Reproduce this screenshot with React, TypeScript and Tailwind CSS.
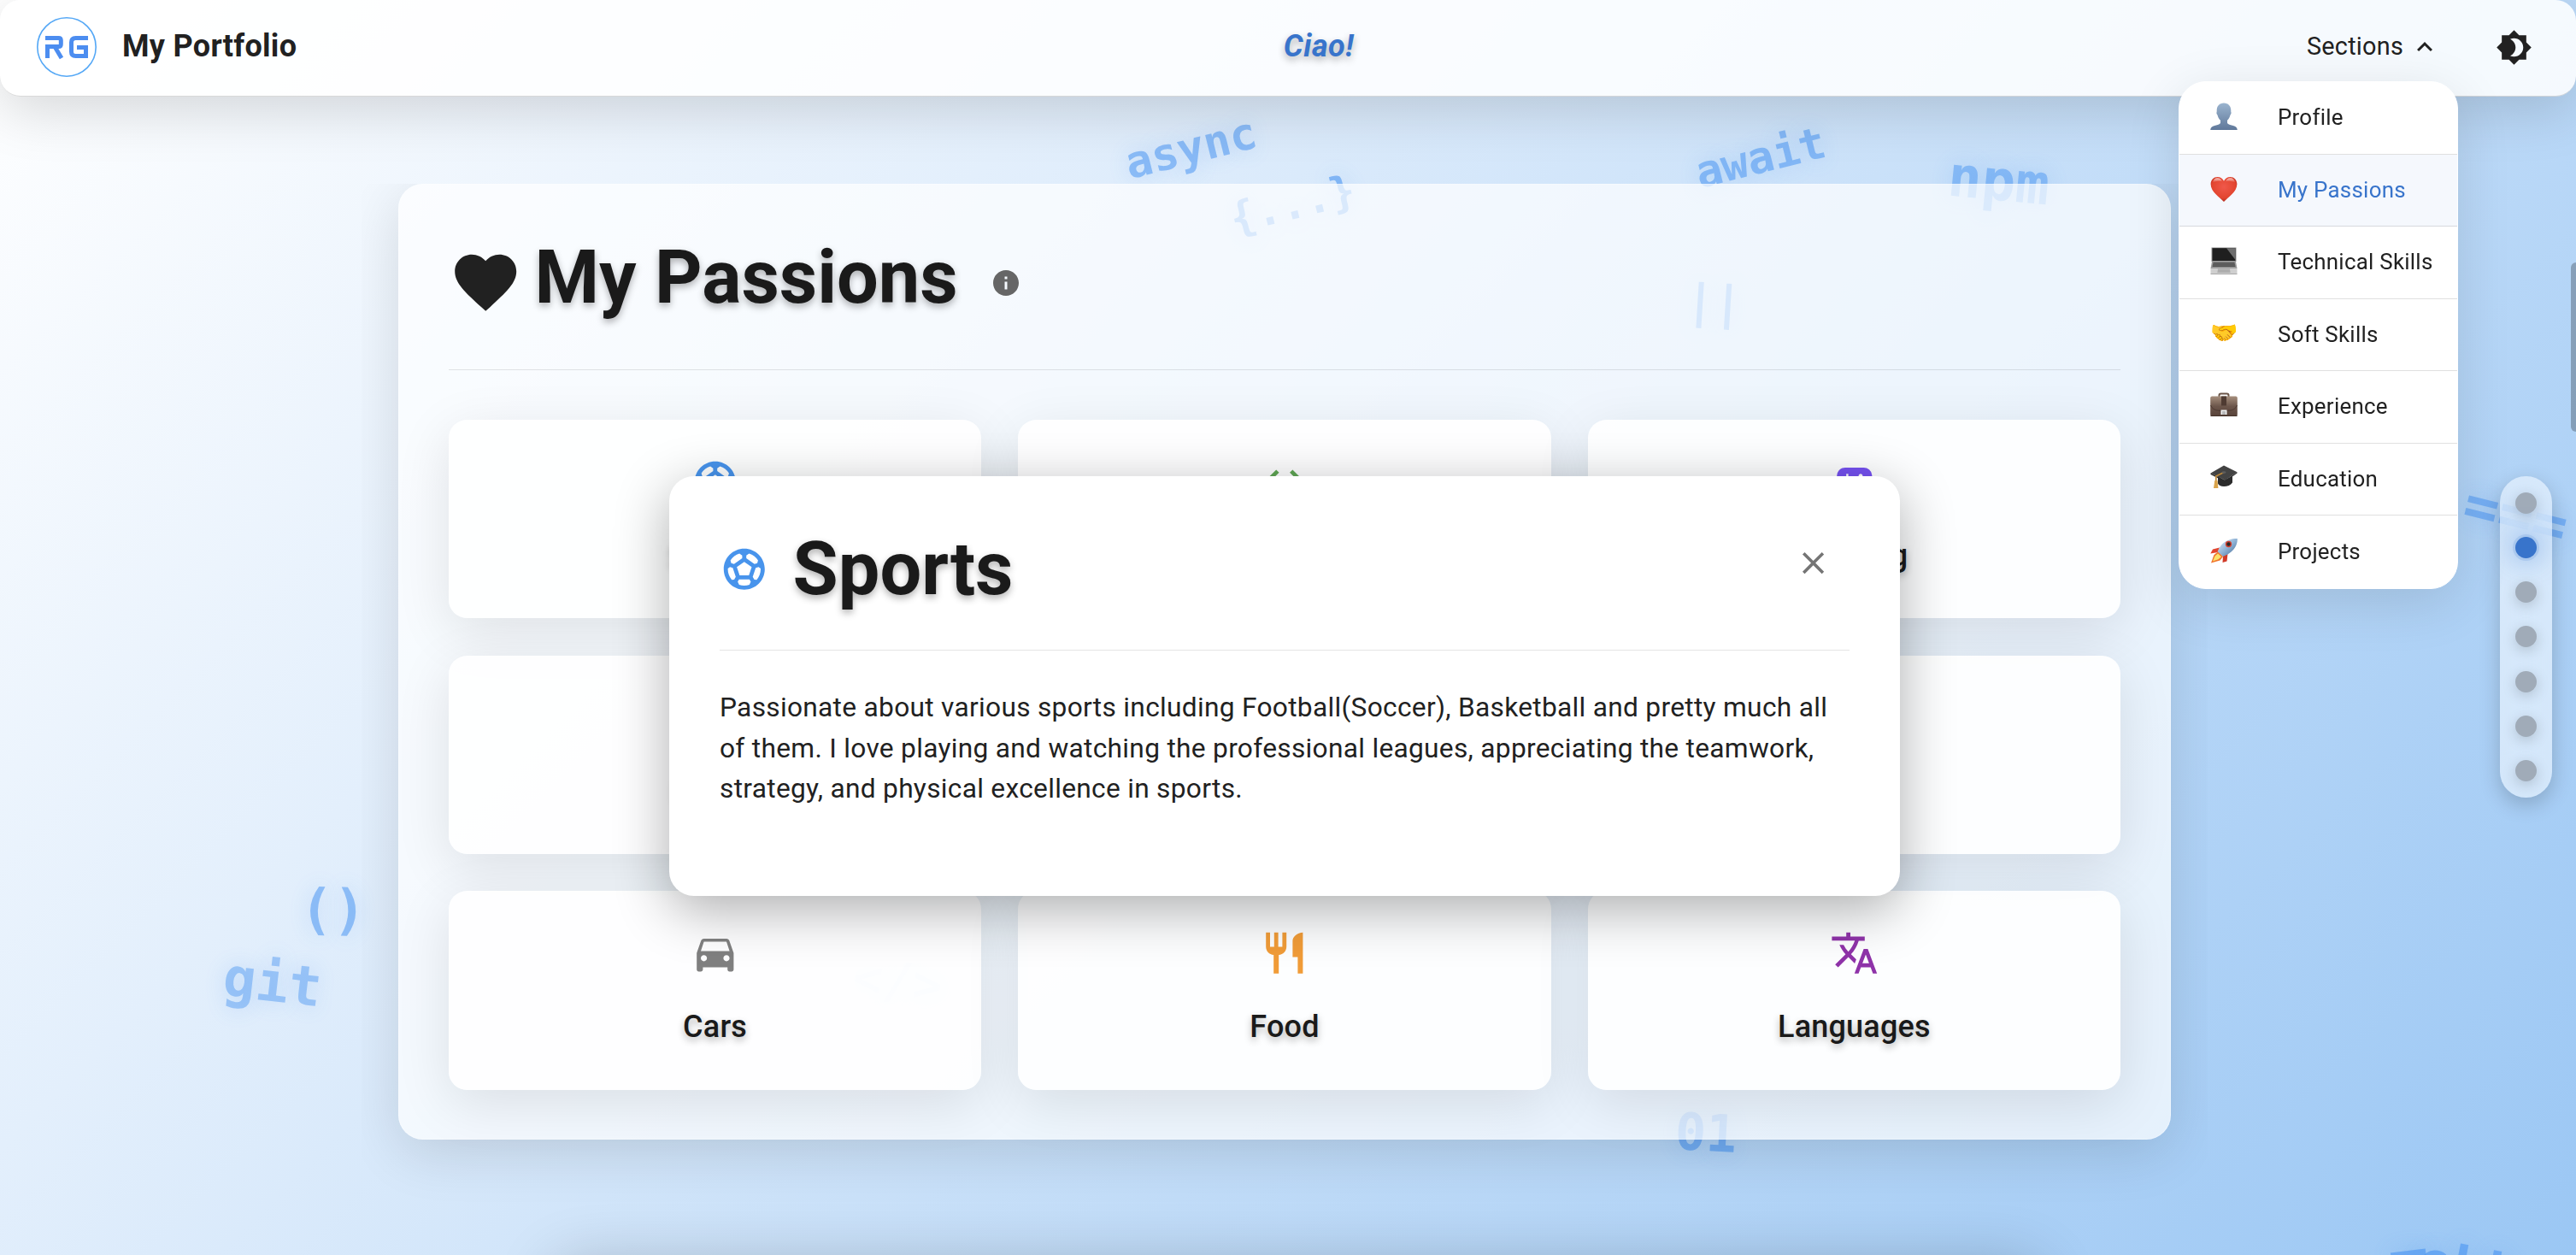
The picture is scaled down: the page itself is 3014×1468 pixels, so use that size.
import React from "react";
import {
  MdBrightness4, MdClose, MdCode, MdDirectionsCar, MdExpandLess, MdFavorite, MdFlight, MdInfo,
  MdMenuBook, MdMusicNote, MdRestaurant, MdSportsEsports, MdSportsSoccer, MdTranslate,
} from "react-icons/md";

// Floating code fragments scattered over the page background.
const tokens = [
  { t: "async", c: "left-[1315px] top-[143px] text-[52px] -rotate-[14deg] text-[#4a95f2]/55" },
  { t: "{...}", c: "left-[1438px] top-[211px] text-[49.5px] -rotate-[14deg] text-[#4a95f2]/60" },
  { t: "await", c: "left-[1982px] top-[154px] text-[51.5px] -rotate-[14deg] text-[#4a95f2]/55" },
  { t: "npm", c: "left-[2279px] top-[173px] text-[66px] rotate-[5.5deg] text-[#4a95f2]/50" },
  { t: "||", c: "left-[1973px] top-[322px] text-[54px] rotate-[3.5deg] text-[#4a95f2]/60" },
  { t: "()", c: "left-[351px] top-[1027px] text-[64px] rotate-[1deg] text-[#4a95f2]/55" },
  { t: "git", c: "left-[261px] top-[1112px] text-[64px] rotate-[6.5deg] text-[#4a95f2]/45" },
  { t: "</>", c: "left-[998px] top-[1115px] text-[58px] rotate-[6deg] text-[#4a95f2]/50" },
  { t: "===", c: "left-[2882px] top-[563px] text-[68px] rotate-[14deg] text-[#4a95f2]/55" },
  { t: "01", c: "left-[1960px] top-[1290px] text-[60px] rotate-[3deg] text-[#4a95f2]/60" },
  { t: "T", c: "left-[2797px] top-[1447px] text-[80px] -rotate-[7deg] text-[#4a95f2]/60" },
  { t: "ebb", c: "left-[2829px] top-[1446px] text-[66px] rotate-[11deg] text-[#4a95f2]/60" },
];

function PersonIcon() {
  return (
    <svg viewBox="0 0 32 32" className="size-8">
      <defs>
        <linearGradient id="person" x1="0" y1="0" x2="0" y2="1">
          <stop offset="0" stopColor="#9ab4cf" />
          <stop offset="1" stopColor="#60789a" />
        </linearGradient>
      </defs>
      <path fill="url(#person)" d="M16 .5c5 0 8.300 3.500 8.300 8.500 0 1-.1 1.500.1 2 .6 1.300-.2 2.800-.9 3.500-.5 2.600-1.800 4.700-3.500 6.300v3.200c1.200 1.700 3.300 2.200 6 2.800 3.500.8 5.600 2 5.800 5.200H.2c.2-3.200 2.300-4.400 5.800-5.200 2.700-.6 4.800-1.100 6-2.800v-3.200c-1.700-1.600-3-3.700-3.500-6.300-.7-.7-1.500-2.200-.9-3.500.2-.5.1-1 .1-2C7.700 4 11 .5 16 .5z" />
    </svg>
  );
}

function HeartIcon() {
  return (
    <svg viewBox="0 0 32 32" className="size-8">
      <defs>
        <radialGradient id="heart" cx=".5" cy=".4" r=".6">
          <stop offset="0" stopColor="#f0584a" />
          <stop offset=".75" stopColor="#e2452f" />
          <stop offset="1" stopColor="#b32c20" />
        </radialGradient>
        <linearGradient id="gloss" x1="0" y1="0" x2="0" y2="1">
          <stop offset="0" stopColor="#fff" stopOpacity=".7" />
          <stop offset="1" stopColor="#fff" stopOpacity="0" />
        </linearGradient>
      </defs>
      <path fill="url(#heart)" d="M16 31C11 25.500.6 19.500.6 10.200.6 5.200 4.300 1.900 8.500 1.900c3.400 0 6 1.800 7.500 4.800 1.500-3 4.100-4.800 7.500-4.800 4.200 0 7.900 3.300 7.900 8.300C31.400 19.500 21 25.500 16 31z" />
      <path fill="url(#gloss)" d="M3 8.500C3.500 5 5.800 3.200 8.500 3.200S13 4.700 13.800 7c-3.300-.6-7.300-.3-10.800 1.500zM29 8.500c-.5-3.500-2.800-5.300-5.500-5.300S19 4.700 18.200 7c3.300-.6 7.300-.3 10.800 1.500z" />
    </svg>
  );
}

function LaptopIcon() {
  return (
    <svg viewBox="0 0 32 32" className="size-8">
      <path fill="#8e8e8e" d="M1.500.5h29v16.500h-29z" />
      <path fill="#1f1f1f" d="M2.500 1.200h27V16h-27z" />
      <path fill="#6e6e6e" d="M19 1.200h10.500V15z" />
      <path fill="#9b9b9b" d="M2 17h28l1.500 8H.5z" />
      <path fill="#4d4d4d" d="M3.500 18h25l1 5h-27z" />
      <path stroke="#8a8a8a" strokeWidth=".5" d="M3 19.600h26M2.800 21.200h26.400" />
      <path fill="#cfcfcf" d="M.5 25h31v6.500H.5z" />
      <path fill="#aeaeae" d="M9 25.500h14l.6 4.500H8.400z" />
      <path fill="#9a9a9a" d="M.5 31h31v.8H.5z" />
    </svg>
  );
}

function BriefcaseIcon() {
  return (
    <svg viewBox="0 0 32 32" className="size-8">
      <defs>
        <linearGradient id="case" x1="0" y1="0" x2="0" y2="1">
          <stop offset="0" stopColor="#a68f7d" />
          <stop offset=".5" stopColor="#6c564b" />
          <stop offset="1" stopColor="#574239" />
        </linearGradient>
      </defs>
      <path fill="none" stroke="#6b5548" strokeWidth="2" d="M10.500 6.500V4.300Q10.500 2.500 12.500 2.500h7q2 0 2 1.800v2.200" />
      <rect x=".2" y="5.500" width="31.600" height="23.500" rx="2" fill="url(#case)" />
      <path fill="none" stroke="#4a372f" strokeWidth=".9" d="M.5 16Q3 22 10 22.300h12Q29 22 31.500 16" />
      <path fill="#4f3b32" d="M13 5.500h6v11h-6z" />
      <path fill="#f1f1f1" d="M12.500 21.500h7v5.500h-7z" />
      <path fill="#b9b9b9" d="M14 23h4v4h-4z" />
      <path fill="#453229" d="M.5 28h31v1H.5z" />
    </svg>
  );
}

function CapIcon() {
  return (
    <svg viewBox="0 0 32 32" className="size-8">
      <path fill="#2c2c2c" d="M9 14l7 5 10-5v7.500c-2 3-6 4.500-10 4.500s-6-1.500-7-3.500z" />
      <path fill="#434343" d="M16 1.500L31.500 9.300 17.500 18.800.5 10.600z" />
      <path fill="#2b2b2b" d="M.5 10.600l17 8.200 14-9.500v1.300L17.500 20.500.5 12z" />
      <path fill="none" stroke="#c08a3a" strokeWidth="1.700" d="M16 9.500L6.800 14v7" />
      <path fill="#d9a34a" d="M5.300 19h3.200l.9 9H4z" />
      <ellipse cx="16" cy="9.500" rx="2.600" ry="1.300" fill="#5d5d5d" />
    </svg>
  );
}

function RocketIcon() {
  return (
    <svg viewBox="0 0 32 32" className="size-8">
      <defs>
        <linearGradient id="hull" x1="0" y1="0" x2="1" y2="1">
          <stop offset="0" stopColor="#e8f0f8" />
          <stop offset=".5" stopColor="#8fb3d6" />
          <stop offset="1" stopColor="#3f658f" />
        </linearGradient>
      </defs>
      <path fill="#e2452f" d="M11 12.500L3 14.500.3 19.500 9 18z" />
      <path fill="#d13a28" d="M20.500 20l-1 8.500-5 1.500.5-8z" />
      <path fill="url(#hull)" d="M31.800 2c.2 5-1.800 11-7.300 15.500-3 2.500-6 4-9.500 5.500L8.500 17.500c1.500-3.800 3.500-7 6-9.500C19.500 3.500 26 1.800 31.800 2z" />
      <circle cx="21.500" cy="8.500" r="3.700" fill="#d6412f" />
      <circle cx="21.500" cy="8.500" r="2.200" fill="#2a2a2a" />
      <path fill="#f0742c" d="M9 17.500l6 5.500-3.500 4.500L1 30.500 4.500 21z" />
      <path fill="#fbe26a" d="M9 19.500l4 3.700-3.500 3L3 28.500l2.500-6z" />
    </svg>
  );
}

const menu = [
  { icon: <PersonIcon />, label: "Profile" },
  { icon: <HeartIcon />, label: "My Passions" },
  { icon: <LaptopIcon />, label: "Technical Skills" },
  { icon: "🤝", label: "Soft Skills" },
  { icon: <BriefcaseIcon />, label: "Experience" },
  { icon: <CapIcon />, label: "Education" },
  { icon: <RocketIcon />, label: "Projects" },
];

const passions = [
  { icon: <MdSportsSoccer />, label: "Sports", color: "text-[#4894ec]" },
  { icon: <MdCode />, label: "Coding", color: "text-[#5fa654]" },
  { icon: <MdSportsEsports />, label: "Gaming", color: "text-[#7551f0]" },
  { icon: <MdMusicNote />, label: "Music", color: "text-[#d8456c]" },
  { icon: <MdFlight />, label: "Travel", color: "text-[#4894ec]" },
  { icon: <MdMenuBook />, label: "Art", color: "text-[#74574a]" },
  { icon: <MdDirectionsCar />, label: "Cars", color: "text-[#808080]" },
  { icon: <MdRestaurant />, label: "Food", color: "text-[#f19c38]" },
  { icon: <MdTranslate />, label: "Languages", color: "text-[#8f33a9]" },
];

function Logo() {
  return (
    <svg className="size-[70px]" viewBox="0 0 70 70" fill="none">
      <circle cx="35" cy="35" r="34.200" stroke="#55a8f6" strokeWidth="1.600" />
      <g stroke="#4c8df0" strokeWidth="5">
        <path d="M10 24.500H25.500Q28.300 24.500 28.300 27.300V31.700Q28.300 34.500 25.500 34.500H12.500V48" />
        <path d="M21 34.500L29 48" />
        <path d="M60 24.500H45.500Q40.500 24.500 40.500 29.500V40.500Q40.500 45.500 45.500 45.500H57.500V35.500H47" />
      </g>
    </svg>
  );
}

function Header() {
  return (
    <header className="relative z-20 flex h-[113px] items-center justify-between rounded-3xl border-b border-black/15 bg-white/85 pl-[43px] pr-[51px] shadow-[0_16px_64px_rgba(0,0,0,0.15)]">
      <div className="flex items-center pb-[2px]">
        <Logo />
        <span className="ml-[30px] pb-[2px] text-[36px] font-bold leading-none tracking-[0.3px] text-[#212121]">My Portfolio</span>
      </div>
      <div className="absolute inset-x-0 top-[34px] text-center text-[36px] font-bold italic leading-[40px] tracking-[0.5px] text-[#3874cb] [text-shadow:0_4px_8px_rgba(0,0,0,0.3)]">
        <span className="relative left-[36px]">Ciao!</span>
      </div>
      <div className="flex items-center pb-[2px] text-[#212121]">
        <span className="pb-[1px] text-[28.8px] leading-none tracking-[0.25px]">Sections</span>
        <MdExpandLess className="ml-[7px] size-9" />
        <MdBrightness4 className="ml-[65px] size-[43px]" />
      </div>
    </header>
  );
}

function Menu() {
  return (
    <nav className="absolute left-[2549px] top-[95px] z-30 flex w-[327px] flex-col overflow-hidden rounded-[32px] border border-white bg-white shadow-[0_16px_64px_rgba(0,0,0,0.12)]">
      {menu.map((m, i) => (
        <div
          key={m.label}
          className={
            "flex h-[84.5px] items-center pl-9 text-[25.92px] tracking-[0.25px] " +
            (i < menu.length - 1 ? "border-b border-black/12 " : "") +
            (i === 1 ? "bg-[#f5f8fd] text-[#3874cb]" : "text-[#212121]")
          }
        >
          <span className="w-[79px] pb-[3px]">{m.icon}</span>
          {m.label}
        </div>
      ))}
    </nav>
  );
}

function Dots() {
  return (
    <div className="absolute left-[2925px] top-[557px] z-10 flex w-[61px] flex-col items-center gap-[27.2px] rounded-full bg-white/50 py-[18.800px] shadow-[0_8px_24px_rgba(0,0,0,0.2)] backdrop-blur-xl">
      {menu.map((m, i) => (
        <span
          key={m.label}
          className={
            "size-[25px] rounded-full " +
            (i === 1
              ? "bg-[#3874cb] shadow-[0_0_0_3px_rgba(56,116,203,0.15),0_0_32px_rgba(56,116,203,0.7)]"
              : "bg-[#a0abb8] shadow-[0_4px_16px_rgba(0,0,0,0.18)]")
          }
        />
      ))}
    </div>
  );
}

function Passions() {
  return (
    <section className="h-[1118px] rounded-[28.8px] border border-white/30 bg-white/70 px-[58px] shadow-[0_16px_64px_rgba(0,0,0,0.12)]">
      <div className="flex h-[217px] items-start border-b border-black/10 pt-[58px]">
        <MdFavorite className="mt-[13px] size-[86.4px] text-[#212121]" />
        <h1 className="ml-[14px] text-[86.4px] font-bold leading-[101px] text-[#1a1a1a] [text-shadow:0_4px_8px_rgba(0,0,0,0.3)]">My Passions</h1>
        <MdInfo className="ml-[38px] mt-[39px] size-9 text-[#666]" />
      </div>
      <div className="mt-[58px] grid grid-cols-3 gap-[43.2px]">
        {passions.map((p) => (
          <div key={p.label} className="flex h-[232.400px] flex-col items-center rounded-[21.6px] bg-white/90 pt-[44px] shadow-[0_16px_64px_rgba(0,0,0,0.1)]">
            <div className={"text-[57.6px] " + p.color}>{p.icon}</div>
            <div className="mt-[30px] text-[36px] font-medium leading-[54px] tracking-[0.2px] text-[#1a1a1a] [text-shadow:0_4px_8px_rgba(0,0,0,0.3)]">{p.label}</div>
          </div>
        ))}
      </div>
    </section>
  );
}

function Modal() {
  return (
    <div className="absolute left-[783px] top-[557px] z-10 h-[491px] w-[1440px] rounded-[28.8px] bg-white px-[59px] shadow-[0_16px_64px_rgba(0,0,0,0.32)]">
      <div className="flex h-[204px] items-center border-b border-black/10 pb-[2px] pt-[16px]">
        <MdSportsSoccer className="mt-px size-[57.6px] text-[#4894ec]" />
        <h2 className="ml-[28px] text-[86.4px] font-bold leading-[100px] text-[#1a1a1a] [text-shadow:0_4px_8px_rgba(0,0,0,0.3)]">Sports</h2>
        <MdClose className="-mt-[13px] ml-auto mr-[21px] size-[43.2px] text-[#757575]" />
      </div>
      <p className="mt-[43px] w-[1322px] text-[31.68px] leading-[47.5px] tracking-[0.3px] text-[#212121]">
        Passionate about various sports including Football(Soccer), Basketball and pretty much all
        <br />
        of them. I love playing and watching the professional leagues, appreciating the teamwork,
        <br />
        strategy, and physical excellence in sports.
      </p>
    </div>
  );
}

export default function App() {
  return (
    <div className="relative h-[1468px] w-[3014px] overflow-hidden bg-[linear-gradient(135deg,#ffffff_0%,#e3effc_30%,#c1dcf8_62%,#9bc7f4_100%)] font-['Roboto',sans-serif]">
      <div className="absolute inset-0 font-['DejaVu_Sans_Mono',monospace] font-bold">
        {tokens.map((k) => (
          <span key={k.t} className={"absolute leading-[1.17] whitespace-nowrap [text-shadow:0_0_24px_rgba(74,149,242,0.22)] " + k.c}>{k.t}</span>
        ))}
      </div>
      <Header />
      <main className="relative ml-[423px] mt-[102px] w-[2160px] overflow-hidden px-[43px] pb-[100px]">
        <Passions />
      </main>
      <div className="ml-[648px] mt-[45px] h-[200px] w-[1740px] rounded-3xl bg-white/70 shadow-[0_0_72px_rgba(0,0,0,0.2)]" />
      <Modal />
      <Menu />
      <Dots />
      <div className="absolute right-0 top-[307px] h-[198px] w-[6px] rounded-l-full bg-black/25" />
    </div>
  );
}
